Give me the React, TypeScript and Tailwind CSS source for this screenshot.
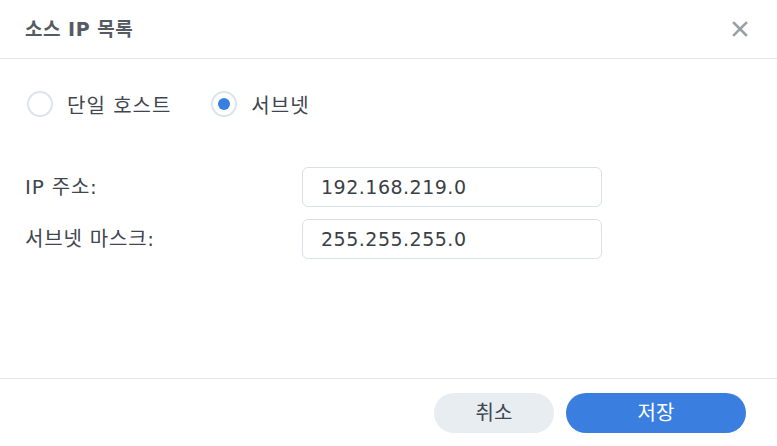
export default function App() {
  const font = { fontFamily: '"DejaVu Sans", "Noto Sans CJK KR", sans-serif' }
  return (
    <div className="w-[777px] h-[446px] bg-white flex flex-col text-[#3f4650]" style={font}>
      {/* Header */}
      <div className="h-[59px] shrink-0 border-b border-[#e4e7ec] flex items-center justify-between pl-[25px] pr-[28px]">
        <h1 className="text-[19px] font-bold text-[#555b63] tracking-[0.5px]">소스 IP 목록</h1>
        <button className="w-[18px] h-[18px] flex items-center justify-center text-[#9aa0a6]">
          <svg width="16" height="16" viewBox="0 0 16 16" fill="none" stroke="currentColor" strokeWidth="2.6" strokeLinecap="square">
            <path d="M2 2l12 12M14 2L2 14" />
          </svg>
        </button>
      </div>

      {/* Body */}
      <div className="flex-1 flex flex-col px-[27px] pt-[32px]">
        <div className="flex items-center h-[26px]">
          <label className="flex items-center gap-[14px] mr-[40px]">
            <span className="w-[26px] h-[26px] rounded-full border-2 border-[#dde3ea] bg-white" />
            <span className="text-[20px] leading-none tracking-[1px] mt-[3px]">단일 호스트</span>
          </label>
          <label className="flex items-center gap-[14px]">
            <span className="w-[26px] h-[26px] rounded-full border-2 border-[#dde3ea] bg-white flex items-center justify-center">
              <span className="w-[12px] h-[12px] rounded-full bg-[#3a7fe0]" />
            </span>
            <span className="text-[20px] leading-none tracking-[1px] mt-[3px]">서브넷</span>
          </label>
        </div>

        <div className="flex flex-col gap-[12px] mt-[50px] -ml-[2px]">
          <div className="flex items-center">
            <span className="w-[277px] text-[20px] tracking-[0.8px]">IP 주소:</span>
            <div className="w-[300px] h-[40px] border border-[#d9e0e8] rounded-[6px] flex items-center pl-[18px] text-[19px] text-[#3a3f46] tracking-[0.5px]">
              192.168.219.0
            </div>
          </div>
          <div className="flex items-center">
            <span className="w-[277px] text-[20px] tracking-[0.8px]">서브넷 마스크:</span>
            <div className="w-[300px] h-[40px] border border-[#d9e0e8] rounded-[6px] flex items-center pl-[18px] text-[19px] text-[#3a3f46] tracking-[0.5px]">
              255.255.255.0
            </div>
          </div>
        </div>
      </div>

      {/* Footer */}
      <div className="h-[68px] shrink-0 border-t border-[#e4e7ec] flex items-start justify-end gap-[12px] pt-[14px] pr-[31px]">
        <button className="w-[120px] h-[40px] rounded-full bg-[#e8edf2] text-[20px] text-[#3f4650]">취소</button>
        <button className="w-[180px] h-[40px] rounded-full bg-[#3a7fe0] text-[20px] text-white">저장</button>
      </div>
    </div>
  )
}
